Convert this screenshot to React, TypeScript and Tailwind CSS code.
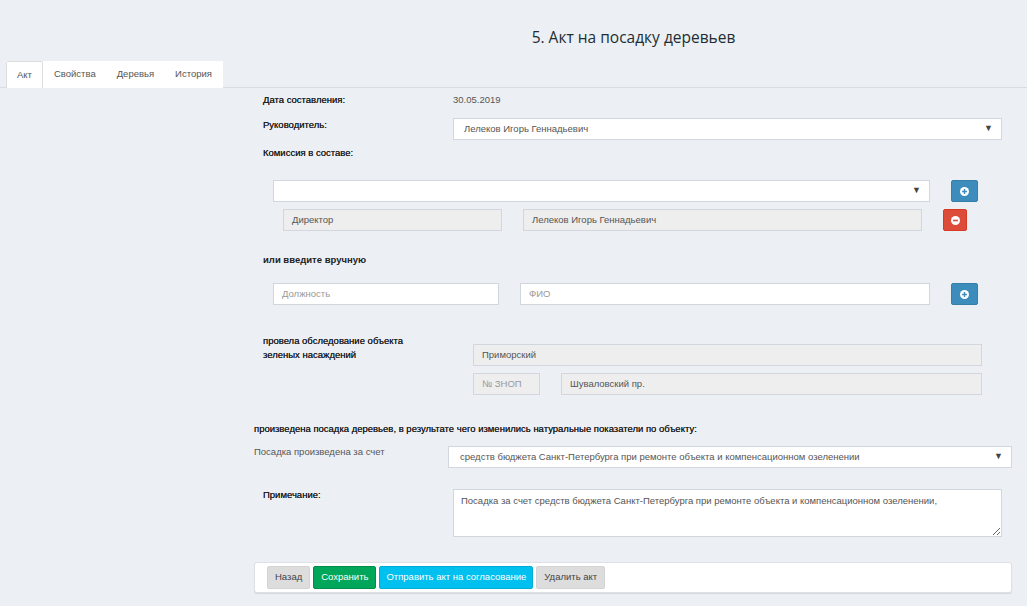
import React from 'react';

const PlusIcon = () => (
  <svg width="9" height="9" viewBox="0 0 10 10">
    <circle cx="5" cy="5" r="5" fill="#fff" />
    <path d="M5 2.3v5.4M2.3 5h5.4" stroke="#3c8dbc" strokeWidth="1.6" />
  </svg>
);

const MinusIcon = () => (
  <svg width="9" height="9" viewBox="0 0 10 10">
    <circle cx="5" cy="5" r="5" fill="#fff" />
    <path d="M2.3 5h5.4" stroke="#dd4b39" strokeWidth="1.8" />
  </svg>
);

const Select = ({ value, className }: { value?: string; className: string }) => (
  <div className={`h-[22px] bg-white border border-[#d2d6de] flex items-center justify-between text-[#555] ${className}`}>
    <span>{value}</span>
    <span className="text-[9px] text-[#444] pr-[8px]">▼</span>
  </div>
);

const Field = ({ value, placeholder, disabled, className }: { value?: string; placeholder?: string; disabled?: boolean; className: string }) => (
  <div
    className={`h-[22px] border border-[#d2d6de] flex items-center pl-[8px] ${disabled ? 'bg-[#eeeeee] text-[#555]' : 'bg-white'} ${className}`}
  >
    {value ? value : <span className="text-[#999]">{placeholder}</span>}
  </div>
);

// labels in the reference are regular weight but dark and slightly heavy
const lbl = 'text-[#1c1c1c] [text-shadow:0_0_0.4px_#333]';

const App: React.FC = () => {
  return (
    <div
      className="min-h-screen w-[1027px] h-[606px] overflow-hidden bg-[#ecf0f5] text-[9.5px] text-[#333]"
      style={{ fontFamily: '"Liberation Sans", Arial, sans-serif' }}
    >
      {/* page title */}
      <div className="h-[61px] pl-[240px] pt-[25px] text-center">
        <h1 className="text-[15.5px] leading-[24px] text-[#222d32]" style={{ fontFamily: '"Open Sans", sans-serif' }}>
          5. Акт на посадку деревьев
        </h1>
      </div>

      {/* tabs */}
      <div className="h-[27px] border-b border-[#d9dde3] pl-[6px] flex">
        <div className="flex bg-white h-[27px]">
          <div className="px-[10px] flex items-center border border-b-0 border-[#ddd] bg-white text-[#555] rounded-t-[2px]">Акт</div>
          <div className="px-[11px] flex items-center text-[#555]">Свойства</div>
          <div className="px-[10px] flex items-center text-[#555]">Деревья</div>
          <div className="px-[11px] flex items-center text-[#555]">История</div>
        </div>
      </div>

      {/* form */}
      <div className="ml-[254px] w-[758px] pt-[5px] flex flex-col">
        <div className="flex h-[15px] items-center">
          <div className={`w-[199px] pl-[9px] ${lbl}`}>Дата составления:</div>
          <div className="text-[#555]">30.05.2019</div>
        </div>

        <div className="flex mt-[10px] items-start">
          <div className={`w-[199px] pl-[9px] leading-[13px] ${lbl}`}>Руководитель:</div>
          <Select value="Лелеков Игорь Геннадьевич" className="w-[549px] pl-[10px]" />
        </div>

        <div className={`mt-[6px] h-[15px] flex items-center pl-[9px] ${lbl}`}>Комиссия в составе:</div>

        <div className="flex mt-[19px] ml-[19px] gap-[21px]">
          <Select className="w-[657px]" />
          <button className="w-[27px] h-[22px] bg-[#3c8dbc] border border-[#367fa9] rounded-[2px] flex items-center justify-center">
            <PlusIcon />
          </button>
        </div>

        <div className="flex mt-[7px] ml-[29px] gap-[21px]">
          <Field disabled value="Директор" className="w-[219px]" />
          <Field disabled value="Лелеков Игорь Геннадьевич" className="w-[399px]" />
          <button className="w-[24px] h-[22px] bg-[#dd4b39] border border-[#d73925] rounded-[2px] flex items-center justify-center">
            <MinusIcon />
          </button>
        </div>

        <div className="mt-[22px] h-[15px] flex items-center pl-[9px] font-bold text-[#222]">или введите вручную</div>

        <div className="flex mt-[15px] ml-[19px] gap-[21px]">
          <Field placeholder="Должность" className="w-[226px]" />
          <Field placeholder="ФИО" className="w-[410px]" />
          <button className="w-[27px] h-[22px] bg-[#3c8dbc] border border-[#367fa9] rounded-[2px] flex items-center justify-center">
            <PlusIcon />
          </button>
        </div>

        <div className="flex mt-[29px] items-start">
          <div className={`w-[219px] pl-[9px] leading-[14px] ${lbl}`}>
            провела обследование объекта
            <br />
            зеленых насаждений
          </div>
          <div className="flex flex-col pt-[10px]">
            <Field disabled value="Приморский" className="w-[509px]" />
            <div className="flex mt-[7px] gap-[21px]">
              <Field disabled value="№ ЗНОП" className="w-[67px] text-[#999]" />
              <Field disabled value="Шуваловский пр." className="w-[421px]" />
            </div>
          </div>
        </div>

        <div className={`mt-[27px] h-[15px] flex items-center ${lbl}`}>
          произведена посадка деревьев, в результате чего изменились натуральные показатели по объекту:
        </div>

        <div className="flex mt-[9px] items-start">
          <div className="w-[194px] leading-[11px] text-[#555]">Посадка произведена за счет</div>
          <Select
            value="средств бюджета Санкт-Петербурга при ремонте объекта и компенсационном озеленении"
            className="w-[564px] pl-[11px]"
          />
        </div>

        <div className="flex mt-[21px] items-start">
          <div className={`w-[199px] pl-[9px] leading-[11px] ${lbl}`}>Примечание:</div>
          <textarea
            readOnly
            defaultValue="Посадка за счет средств бюджета Санкт-Петербурга при ремонте объекта и компенсационном озеленении,"
            className="w-[549px] h-[48px] bg-white border border-[#d2d6de] px-[7px] py-[4px] text-[#555] outline-none resize-y"
          />
        </div>

        <div className="mt-[25px] h-[31px] bg-white border border-[#dde1e6] rounded-[3px] shadow-[0_1px_1px_rgba(0,0,0,0.1)] flex items-center pl-[12px] gap-[3px]">
          <button className="h-[23px] px-[7px] bg-[#dddddd] border border-[#d4d4d4] rounded-[2px] text-[#444]">Назад</button>
          <button className="h-[23px] px-[7px] bg-[#00a65a] border border-[#008d4c] rounded-[2px] text-white">Сохранить</button>
          <button className="h-[23px] px-[6px] bg-[#00c0ef] border border-[#00acd6] rounded-[2px] text-white">
            Отправить акт на согласование
          </button>
          <button className="h-[23px] px-[7px] bg-[#dddddd] border border-[#d4d4d4] rounded-[2px] text-[#444]">Удалить акт</button>
        </div>
      </div>
    </div>
  );
};

export default App;
